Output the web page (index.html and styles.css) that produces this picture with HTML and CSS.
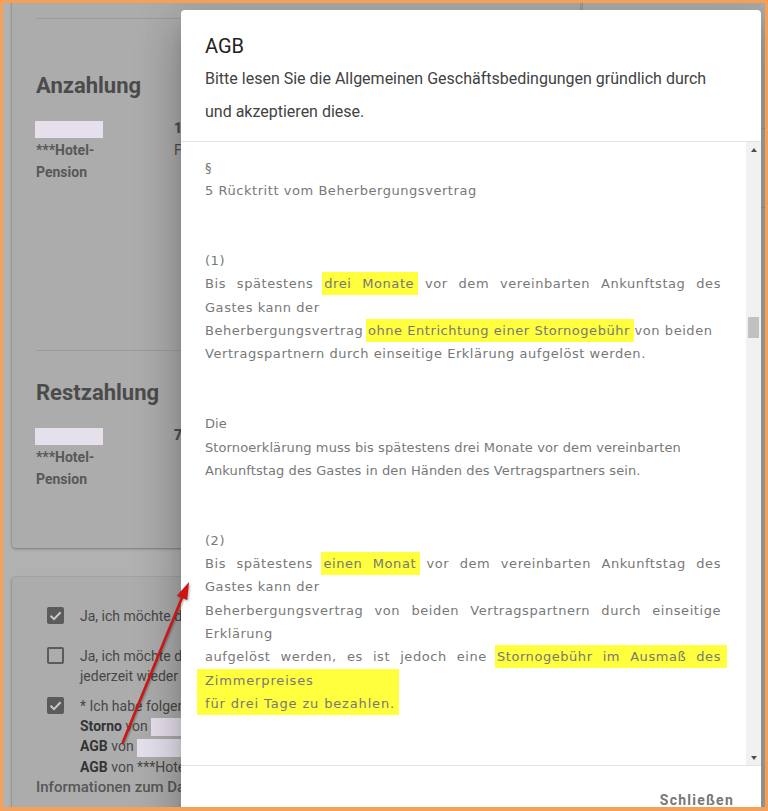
FILE: index.html
```html
<!DOCTYPE html>
<html lang="de">
<head>
<meta charset="utf-8">
<title>AGB</title>
<link rel="stylesheet" href="styles.css">
</head>
<body>
<div class="page">
  <div class="col-left">
    <section class="card card-top">
      <div class="divider first"></div>
      <h2 class="pay-title t1">Anzahlung</h2>
      <div class="pay-row r-a">
        <div class="pay-name"><span class="redact"></span><br>***Hotel-<br>Pension</div>
        <div class="pay-info"><b>1.000,00 €</b><br><span class="reg">Fällig am 01.03.2024</span></div>
      </div>
      <div class="divider second"></div>
      <h2 class="pay-title t2">Restzahlung</h2>
      <div class="pay-row r-b">
        <div class="pay-name"><span class="redact"></span><br>***Hotel-<br>Pension</div>
        <div class="pay-info"><b>7.500,00 €</b></div>
      </div>
    </section>
    <section class="card card-consent">
      <div class="check-row r1">
        <span class="cb on"><svg viewBox="0 0 17 17" width="17" height="17"><path d="M3.6 8.8 L7 12.1 L13.6 5.2" fill="none" stroke="#c9c9c9" stroke-width="2"/></svg></span>
        <div class="check-text">Ja, ich möchte den Newsletter erhalten.</div>
      </div>
      <div class="check-row r2">
        <span class="cb off"></span>
        <div class="check-text">Ja, ich möchte den Newsletter erhalten. Ich kann mich<br>jederzeit wieder abmelden.</div>
      </div>
      <div class="check-row r3">
        <span class="cb on"><svg viewBox="0 0 17 17" width="17" height="17"><path d="M3.6 8.8 L7 12.1 L13.6 5.2" fill="none" stroke="#c9c9c9" stroke-width="2"/></svg></span>
        <div class="check-text">* Ich habe folgende Bedingungen gelesen und akzeptiere diese:<br><b>Storno</b> von <span class="redact wide"></span><br><b>AGB</b> von <span class="redact wide"></span><br><b>AGB</b> von ***Hotel-Pension</div>
      </div>
      <div class="info">Informationen zum Datenschutz</div>
    </section>
  </div>
  <div class="col-right">
    <section class="card card-side">
      <div class="side-line l1"></div>
      <div class="side-line l2"></div>
    </section>
  </div>
</div>

<div class="dialog">
  <div class="dlg-head">
    <h1 class="dlg-title">AGB</h1>
    <p class="dlg-sub">Bitte lesen Sie die Allgemeinen Geschäftsbedingungen gründlich durch<br>und akzeptieren diese.</p>
  </div>
  <div class="dlg-body">
    <div class="dlg-content">
      <div class="sec">
        <div class="l">§</div>
        <div class="l">5 Rücktritt vom Beherbergungsvertrag</div>
      </div>
      <div class="sec">
        <div class="l">(1)</div>
        <div class="l j">Bis spätestens <span class="hl">drei Monate</span> vor dem vereinbarten Ankunftstag des</div>
        <div class="l">Gastes kann der</div>
        <div class="l">Beherbergungsvertrag <span class="hl">ohne Entrichtung einer Stornogebühr</span> von beiden</div>
        <div class="l">Vertragspartnern durch einseitige Erklärung aufgelöst werden.</div>
      </div>
      <div class="sec tight">
        <div class="l">Die</div>
        <div class="l">Stornoerklärung muss bis spätestens drei Monate vor dem vereinbarten</div>
        <div class="l">Ankunftstag des Gastes in den Händen des Vertragspartners sein.</div>
      </div>
      <div class="sec">
        <div class="l">(2)</div>
        <div class="l j">Bis spätestens <span class="hl">einen Monat</span> vor dem vereinbarten Ankunftstag des</div>
        <div class="l">Gastes kann der</div>
        <div class="l j">Beherbergungsvertrag von beiden Vertragspartnern durch einseitige</div>
        <div class="l">Erklärung</div>
        <div class="l j">aufgelöst werden, es ist jedoch eine <span class="hl end">Stornogebühr im Ausmaß des</span></div>
        <div class="hl-block">Zimmerpreises<br>für drei Tage zu bezahlen.</div>
      </div>
    </div>
    <div class="scrollbar">
      <span class="sb-btn"><span class="tri up"></span></span>
      <span class="sb-thumb"></span>
      <span class="sb-fill"></span>
      <span class="sb-btn"><span class="tri down"></span></span>
    </div>
  </div>
  <div class="dlg-foot">
    <button class="btn" type="button">Schließen</button>
  </div>
</div>

<svg class="arrow" width="768" height="811" viewBox="0 0 768 811">
  <line x1="123" y1="742" x2="182.5" y2="596.5" stroke="#cf1414" stroke-width="2.6" stroke-linecap="round"/>
  <polygon points="189,582 187.2,600 176.8,595.7" fill="#cf1414"/>
</svg>
<div class="frame"></div>
</body>
</html>
```
FILE: styles.css
```css
* { box-sizing: border-box; }
html, body { margin: 0; padding: 0; }
body {
  width: 768px;
  height: 811px;
  overflow: hidden;
  position: relative;
  background: #b1b1b1;
  font-family: Roboto, "Liberation Sans", sans-serif;
}

/* background page (under the modal overlay) */
.page {
  display: flex;
  gap: 3px;
  padding-left: 12px;
  height: 811px;
}
.col-left {
  width: 568px;
  display: flex;
  flex-direction: column;
  gap: 29px;
}
.col-right { flex: 1; }
.card {
  background: #acacac;
  box-shadow: 0 1px 3px rgba(0,0,0,0.28), 0 0 0 1px rgba(0,0,0,0.05);
}
.card-top {
  height: 548px;
  padding: 0 24px;
  border-radius: 0 0 4px 4px;
}
.card-consent {
  flex: 1;
  border-radius: 4px 4px 0 0;
  padding: 29px 0 0 35px;
}
.card-side { height: 811px; padding-top: 128px; }
.side-line { height: 1px; background: #9b9b9b; }
.side-line.l2 { margin-top: 78px; }

.divider { height: 1px; background: #9c9c9c; }
.divider.first { margin-top: 18px; }
.divider.second { margin-top: 167px; }
.pay-title {
  margin: 0;
  font-size: 22px;
  line-height: 30px;
  font-weight: 700;
  color: #4b4b4b;
}
.t1 { margin-top: 52px; }
.t2 { margin-top: 27px; }
.pay-row {
  display: flex;
  margin-top: 16px;
  font-size: 14px;
  line-height: 22px;
  font-weight: 700;
  color: #585858;
}
.pay-name { width: 138px; }
.pay-info { white-space: nowrap; color: #4f4f4f; }
.pay-info .reg { font-weight: 400; }
.redact {
  display: inline-block;
  width: 68px;
  height: 17px;
  margin-left: -1px;
  vertical-align: middle;
  background: #e6e0ec;
}
.redact.wide { width: 110px; height: 18px; margin-left: 0; }

.check-row {
  display: flex;
  gap: 16px;
  font-size: 14px;
  line-height: 20px;
  color: #474747;
  white-space: nowrap;
}
.check-row b { color: #353535; font-weight: 700; }
.r1 { margin-bottom: 20px; }
.r2 { margin-bottom: 10px; }
.cb {
  flex: none;
  width: 17px;
  height: 17px;
  margin-top: 1px;
  border-radius: 2px;
}
.cb svg { display: block; }
.cb.on { background: #5b5b5b; }
.cb.off { border: 2px solid #5b5b5b; }
.info {
  margin-left: -11px;
  font-size: 15px;
  line-height: 20px;
  font-weight: 500;
  color: #575757;
  white-space: nowrap;
}

/* modal dialog */
.dialog {
  position: absolute;
  left: 181px;
  top: 10px;
  width: 580px;
  height: 840px;
  background: #fff;
  border-radius: 4px;
  box-shadow: 0 11px 15px -7px rgba(0,0,0,0.2), 0 24px 38px 3px rgba(0,0,0,0.14), 0 9px 46px 8px rgba(0,0,0,0.12);
  display: flex;
  flex-direction: column;
  overflow: hidden;
}
.dlg-head {
  flex: none;
  height: 132px;
  padding: 20px 24px 0;
  border-bottom: 1px solid #e4e4e4;
}
.dlg-title {
  margin: 0;
  font-size: 20px;
  line-height: 32px;
  font-weight: 400;
  color: #222;
}
.dlg-sub {
  margin: 0;
  font-size: 16px;
  line-height: 33px;
  color: #424242;
}
.dlg-body {
  flex: none;
  height: 624px;
  display: flex;
  border-bottom: 1px solid #e4e4e4;
}
.dlg-content {
  flex: 1;
  overflow: hidden;
  padding: 14px 25px 0 24px;
  font-family: "DejaVu Sans", Verdana, sans-serif;
  font-size: 13px;
  line-height: 23.3px;
  letter-spacing: 0.55px;
  color: #787878;
}
.sec + .sec { margin-top: 46.6px; }
.sec.tight { letter-spacing: 0.1px; }
.l.j { text-align: justify; text-align-last: justify; }
.hl {
  background: #ffff3e;
  padding: 4px 4px 4px 2px;
  margin: 0 -4px 0 -2px;
}
.hl.end { padding-right: 6px; margin-right: -6px; }
.hl-block {
  width: fit-content;
  margin-left: -8px;
  padding: 0 4px 0 8px;
  letter-spacing: 0.85px;
  background: #ffff3e;
}

.scrollbar {
  flex: none;
  width: 15px;
  background: #f1f1f1;
  display: flex;
  flex-direction: column;
  align-items: center;
}
.sb-btn {
  flex: none;
  width: 15px;
  height: 15px;
  display: flex;
  align-items: center;
  justify-content: center;
}
.tri { width: 0; height: 0; border-left: 3.5px solid transparent; border-right: 3.5px solid transparent; }
.tri.up { border-bottom: 4px solid #505050; }
.tri.down { border-top: 4px solid #505050; }
.sb-thumb {
  flex: none;
  width: 11px;
  height: 21px;
  margin-top: 160px;
  background: #c1c1c1;
}
.sb-fill { flex: 1; }

.dlg-foot {
  flex: none;
  display: flex;
  justify-content: flex-end;
  padding: 16px 20px 8px;
}
.btn {
  height: 36px;
  padding: 0 7px 0 8px;
  border: 0;
  background: none;
  font-family: Roboto, "Liberation Sans", sans-serif;
  font-size: 14px;
  font-weight: 700;
  letter-spacing: 1.25px;
  color: #777;
}

.arrow {
  position: absolute;
  left: 0;
  top: 0;
  pointer-events: none;
  filter: drop-shadow(1px 1px 1px rgba(0,0,0,0.35));
}
.frame {
  position: absolute;
  inset: 0;
  border: 3px solid #f6a057;
  border-bottom-width: 4px;
  pointer-events: none;
}
```
